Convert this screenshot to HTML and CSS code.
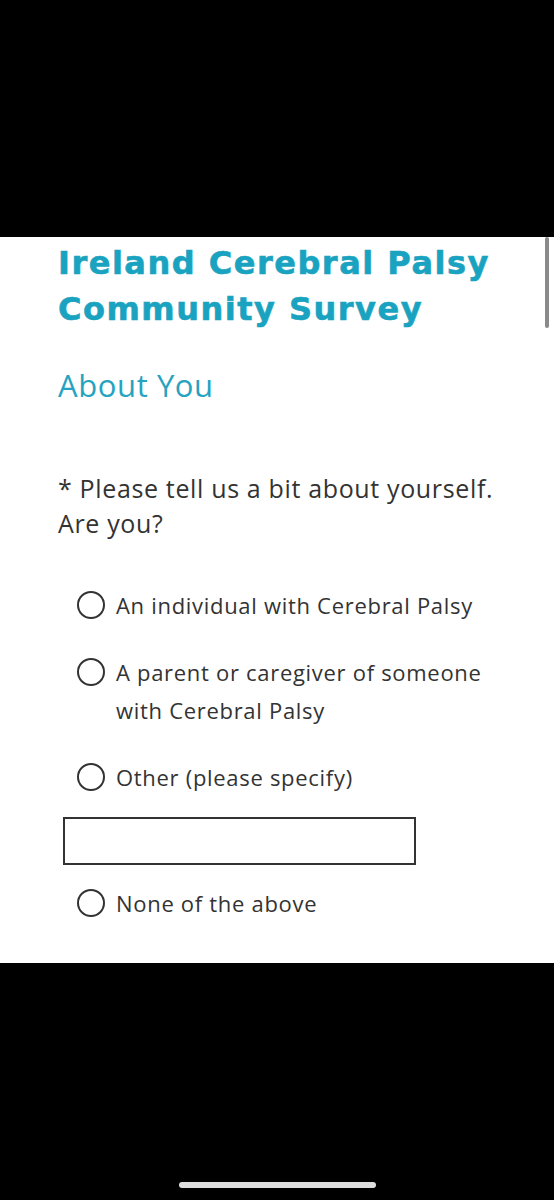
FILE: index.html
```html
<!DOCTYPE html>
<html>
<head>
<meta charset="utf-8">
<link rel="stylesheet" href="styles.css">
</head>
<body>
<div class="top-bar"></div>
<main class="page">
  <div class="scrollbar"></div>
  <h1 class="survey-title">Ireland Cerebral Palsy Community Survey</h1>
  <h2 class="section-title">About You</h2>
  <p class="question">* Please tell us a bit about yourself. Are you?</p>
  <div class="options">
    <label class="option"><span class="radio"></span><span class="option-text">An individual with Cerebral Palsy</span></label>
    <label class="option"><span class="radio"></span><span class="option-text">A parent or caregiver of someone with Cerebral Palsy</span></label>
    <label class="option"><span class="radio"></span><span class="option-text">Other (please specify)</span></label>
    <div class="other-box"></div>
    <label class="option"><span class="radio"></span><span class="option-text">None of the above</span></label>
  </div>
</main>
<div class="bottom-bar"><div class="home-indicator"></div></div>
</body>
</html>
```
FILE: styles.css
```css
html, body {
  margin: 0;
  padding: 0;
  background: #000;
}
body {
  width: 554px;
  height: 1200px;
  display: flex;
  flex-direction: column;
}
.top-bar {
  height: 237px;
  background: #000;
}
.page {
  position: relative;
  height: 726px;
  background: #fff;
  box-sizing: border-box;
  padding: 3px 0 0 58px;
  color: #333;
  overflow: hidden;
}
.scrollbar {
  position: absolute;
  right: 5px;
  top: 0;
  width: 4px;
  height: 91px;
  border-radius: 2px;
  background: #8a8a8a;
}
.survey-title {
  margin: 0;
  width: 480px;
  font-family: "DejaVu Sans", sans-serif;
  font-weight: 700;
  font-size: 32px;
  line-height: 46px;
  letter-spacing: 1.5px;
  color: #1aa3c0;
  -webkit-text-stroke: 0.6px #1aa3c0;
}
.section-title {
  margin: 33px 0 0;
  font-family: "Open Sans", sans-serif;
  font-weight: 400;
  font-size: 31px;
  line-height: 40px;
  letter-spacing: 0.6px;
  color: #25a3c0;
}
.question {
  margin: 66px 0 0;
  width: 440px;
  font-family: "Open Sans", sans-serif;
  font-size: 25px;
  line-height: 35px;
  letter-spacing: 0.65px;
  color: #333;
}
.options {
  margin: 45px 0 0 19px;
  display: flex;
  flex-direction: column;
}
.option {
  display: flex;
  align-items: flex-start;
  gap: 11px;
  font-family: "Open Sans", sans-serif;
  font-size: 22px;
  line-height: 38px;
  letter-spacing: 0.7px;
  color: #333;
  width: 445px;
}
.option + .option {
  margin-top: 29px;
}
.radio {
  flex: none;
  width: 28px;
  height: 28px;
  margin-top: 5px;
  box-sizing: border-box;
  border: 2px solid #333;
  border-radius: 50%;
}
.other-box {
  margin: 21px 0 19px -14px;
  width: 353px;
  height: 48px;
  box-sizing: border-box;
  border: 2px solid #333;
}
.bottom-bar {
  flex: 1;
  background: #000;
  display: flex;
  justify-content: center;
  align-items: flex-end;
  padding-bottom: 12px;
}
.home-indicator {
  width: 197px;
  height: 6px;
  border-radius: 3px;
  background: #ddd;
  margin-left: 1px;
}
```
